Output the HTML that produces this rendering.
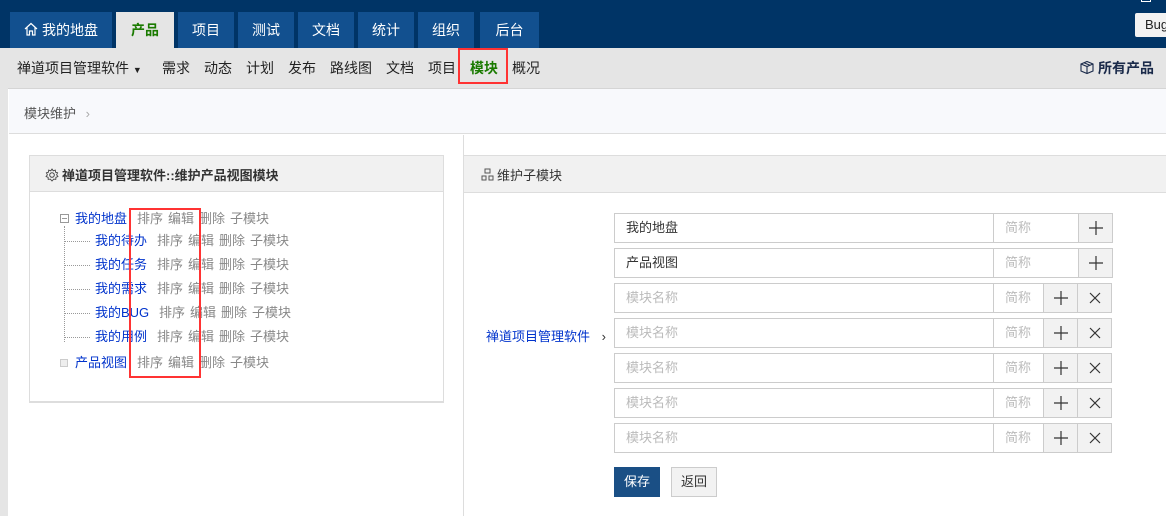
<!DOCTYPE html>
<html><head><meta charset="utf-8"><style>
*{margin:0;padding:0;box-sizing:border-box}
body{width:1166px;height:516px;overflow:hidden;background:#e5e5e5;font-family:"Liberation Sans","Noto Sans CJK SC",sans-serif;font-size:13px;color:#333;position:relative}
.a{position:absolute}
#top{left:0;top:0;width:1166px;height:48px;background:#003466}
.tab{position:absolute;top:12px;height:36px;background:#12508f;color:#fff;font-size:14px;line-height:36px;text-align:center}
.tab.on{background:#e5e5e5;color:#1a7a00;font-weight:bold}
.nav{top:59px;font-size:14px;color:#222;line-height:18px}
.tree{font-size:13px;line-height:16px;white-space:nowrap}
.n{color:#0033cc}
.g{color:#888}
.g span{display:inline-block;margin-right:5px}
.inp{position:absolute;height:30px;border:1px solid #ccc;background:#fff;line-height:28px;padding-left:11px;font-size:13px}
.btn{position:absolute;height:30px;width:35px;border:1px solid #ccc;background:#f2f2f2}
.btn svg{position:absolute;left:10px;top:7px}
</style></head><body>
<div id="top" class="a"></div>
<div class="a" style="left:1135px;top:13px;width:40px;height:24px;background:#f2f2f2;border-radius:2px;font-size:13px;line-height:24px;padding-left:10px;color:#222">Bug</div>
<div class="a" style="left:1141px;top:-6px;width:10px;height:8px;border:1px solid #fff"></div>
<div class="tab" style="left:10px;width:102px"><svg width="14" height="14" viewBox="0 0 14 14" style="vertical-align:-1px;margin-right:4px"><path d="M1 7L7 1.5L13 7M3 5.5V13H5.5V9H8.5V13H11V5.5" fill="none" stroke="#fff" stroke-width="1.2"/></svg>我的地盘</div>
<div class="tab on" style="left:116px;width:58px">产品</div>
<div class="tab" style="left:178px;width:56px">项目</div>
<div class="tab" style="left:238px;width:56px">测试</div>
<div class="tab" style="left:298px;width:56px">文档</div>
<div class="tab" style="left:358px;width:56px">统计</div>
<div class="tab" style="left:418px;width:56px">组织</div>
<div class="tab" style="left:480px;width:59px">后台</div>

<div class="a nav" style="left:17px">禅道项目管理软件 <span style="font-size:9px">▼</span></div>
<div class="a nav" style="left:162px">需求</div>
<div class="a nav" style="left:204px">动态</div>
<div class="a nav" style="left:246px">计划</div>
<div class="a nav" style="left:288px">发布</div>
<div class="a nav" style="left:330px">路线图</div>
<div class="a nav" style="left:386px">文档</div>
<div class="a nav" style="left:428px">项目</div>
<div class="a nav" style="left:470px;color:#1a7a00;font-weight:bold">模块</div>
<div class="a nav" style="left:512px">概况</div>
<div class="a" style="left:458px;top:48px;width:50px;height:36px;border:2px solid #f33"></div>
<div class="a nav" style="left:1079px;font-weight:bold;color:#1a2a4a"><svg width="16" height="15" viewBox="0 0 16 15" style="vertical-align:-2px;margin-right:3px"><path d="M2 4L8 1.5L14 4V11L8 13.5L2 11ZM2 4L8 6.5L14 4M8 6.5V13.5M5 2.8L11 5.3" fill="none" stroke="#1a2a4a" stroke-width="1.1"/></svg>所有产品</div>

<div class="a" style="left:8px;top:88px;width:1158px;height:428px;background:#fff;border-top:1px solid #d5d5d5"></div>
<div class="a" style="left:9px;top:89px;width:1157px;height:45px;background:#f8f9fc;border-bottom:1px solid #ddd"></div>
<div class="a" style="left:24px;top:103px;font-size:13px;color:#555">模块维护 <span style="color:#aaa;margin-left:6px">›</span></div>

<div class="a" style="left:463px;top:135px;width:1px;height:381px;background:#ddd"></div>

<div class="a" style="left:29px;top:155px;width:415px;height:248px;border:1px solid #ddd;border-bottom:2px solid #ddd"></div>
<div class="a" style="left:30px;top:156px;width:413px;height:36px;background:#f1f1f1;border-bottom:1px solid #ddd"></div>
<div class="a" style="left:45px;top:165px;font-weight:bold;color:#333"><svg width="14" height="14" viewBox="0 0 14 14" style="vertical-align:-2px;margin-right:3px"><circle cx="7" cy="7" r="2.3" fill="none" stroke="#444"/><path d="M7 1L8.2 2.8L10.3 2.1L10.5 4.2L12.6 4.8L11.6 6.8L12.9 8.5L10.9 9.3L10.8 11.4L8.7 11.1L7 13L5.3 11.1L3.2 11.4L3.1 9.3L1.1 8.5L2.4 6.8L1.4 4.8L3.5 4.2L3.7 2.1L5.8 2.8Z" fill="none" stroke="#444" stroke-width="0.9"/></svg>禅道项目管理软件::维护产品视图模块</div>

<div class="a" style="left:64px;top:226px;width:1px;height:116px;border-left:1px dotted #999"></div>
<div class="a" style="left:65px;top:241px;width:25px;border-top:1px dotted #999"></div>
<div class="a" style="left:65px;top:265px;width:25px;border-top:1px dotted #999"></div>
<div class="a" style="left:65px;top:289px;width:25px;border-top:1px dotted #999"></div>
<div class="a" style="left:65px;top:313px;width:25px;border-top:1px dotted #999"></div>
<div class="a" style="left:65px;top:337px;width:25px;border-top:1px dotted #999"></div>
<div class="a" style="left:60px;top:214px;width:9px;height:9px;border:1px solid #999;font-size:0"><div style="margin:3px 1px;height:1px;background:#999"></div></div>
<div class="a" style="left:60px;top:359px;width:8px;height:8px;border:1px solid #ccc;background:#eee"></div>

<div class="a tree n" style="left:75px;top:211px">我的地盘</div><div class="a tree g" style="left:137px;top:211px"><span>排序</span><span>编辑</span><span>删除</span><span>子模块</span></div>
<div class="a tree n" style="left:95px;top:233px">我的待办</div><div class="a tree g" style="left:157px;top:233px"><span>排序</span><span>编辑</span><span>删除</span><span>子模块</span></div>
<div class="a tree n" style="left:95px;top:257px">我的任务</div><div class="a tree g" style="left:157px;top:257px"><span>排序</span><span>编辑</span><span>删除</span><span>子模块</span></div>
<div class="a tree n" style="left:95px;top:281px">我的需求</div><div class="a tree g" style="left:157px;top:281px"><span>排序</span><span>编辑</span><span>删除</span><span>子模块</span></div>
<div class="a tree n" style="left:95px;top:305px">我的BUG</div><div class="a tree g" style="left:159px;top:305px"><span>排序</span><span>编辑</span><span>删除</span><span>子模块</span></div>
<div class="a tree n" style="left:95px;top:329px">我的用例</div><div class="a tree g" style="left:157px;top:329px"><span>排序</span><span>编辑</span><span>删除</span><span>子模块</span></div>
<div class="a tree n" style="left:75px;top:355px">产品视图</div><div class="a tree g" style="left:137px;top:355px"><span>排序</span><span>编辑</span><span>删除</span><span>子模块</span></div>
<div class="a" style="left:129px;top:208px;width:72px;height:170px;border:2px solid #f33"></div>

<div class="a" style="left:464px;top:155px;width:702px;height:38px;background:#f1f1f1;border-top:1px solid #ddd;border-bottom:1px solid #ddd"></div>
<div class="a" style="left:481px;top:165px;color:#333"><svg width="13" height="13" viewBox="0 0 13 13" style="vertical-align:-1px;margin-right:3px"><rect x="4" y="1" width="5" height="4" fill="none" stroke="#555"/><rect x="1" y="8" width="4" height="4" fill="none" stroke="#555"/><rect x="8" y="8" width="4" height="4" fill="none" stroke="#555"/></svg>维护子模块</div>
<div class="a" style="left:486px;top:326px;color:#0033cc">禅道项目管理软件 <span style="color:#333;margin-left:8px">›</span></div>

<div class="inp" style="left:614px;top:213px;width:380px">我的地盘</div><div class="inp" style="left:993px;top:213px;width:86px;color:#bbb">简称</div><div class="btn" style="left:1078px;top:213px"><svg width="14" height="14"><path d="M7 0V14M0 7H14" stroke="#333" stroke-width="1.2"/></svg></div>
<div class="inp" style="left:614px;top:248px;width:380px">产品视图</div><div class="inp" style="left:993px;top:248px;width:86px;color:#bbb">简称</div><div class="btn" style="left:1078px;top:248px"><svg width="14" height="14"><path d="M7 0V14M0 7H14" stroke="#333" stroke-width="1.2"/></svg></div>

<div class="inp" style="left:614px;top:283px;width:380px;color:#bbb">模块名称</div><div class="inp" style="left:993px;top:283px;width:51px;color:#bbb">简称</div><div class="btn" style="left:1043px;top:283px"><svg width="14" height="14"><path d="M7 0V14M0 7H14" stroke="#333" stroke-width="1.2"/></svg></div><div class="btn" style="left:1077px;top:283px"><svg width="14" height="14"><path d="M2 2L12 12M12 2L2 12" stroke="#333" stroke-width="1.2"/></svg></div>
<div class="inp" style="left:614px;top:318px;width:380px;color:#bbb">模块名称</div><div class="inp" style="left:993px;top:318px;width:51px;color:#bbb">简称</div><div class="btn" style="left:1043px;top:318px"><svg width="14" height="14"><path d="M7 0V14M0 7H14" stroke="#333" stroke-width="1.2"/></svg></div><div class="btn" style="left:1077px;top:318px"><svg width="14" height="14"><path d="M2 2L12 12M12 2L2 12" stroke="#333" stroke-width="1.2"/></svg></div>
<div class="inp" style="left:614px;top:353px;width:380px;color:#bbb">模块名称</div><div class="inp" style="left:993px;top:353px;width:51px;color:#bbb">简称</div><div class="btn" style="left:1043px;top:353px"><svg width="14" height="14"><path d="M7 0V14M0 7H14" stroke="#333" stroke-width="1.2"/></svg></div><div class="btn" style="left:1077px;top:353px"><svg width="14" height="14"><path d="M2 2L12 12M12 2L2 12" stroke="#333" stroke-width="1.2"/></svg></div>
<div class="inp" style="left:614px;top:388px;width:380px;color:#bbb">模块名称</div><div class="inp" style="left:993px;top:388px;width:51px;color:#bbb">简称</div><div class="btn" style="left:1043px;top:388px"><svg width="14" height="14"><path d="M7 0V14M0 7H14" stroke="#333" stroke-width="1.2"/></svg></div><div class="btn" style="left:1077px;top:388px"><svg width="14" height="14"><path d="M2 2L12 12M12 2L2 12" stroke="#333" stroke-width="1.2"/></svg></div>
<div class="inp" style="left:614px;top:423px;width:380px;color:#bbb">模块名称</div><div class="inp" style="left:993px;top:423px;width:51px;color:#bbb">简称</div><div class="btn" style="left:1043px;top:423px"><svg width="14" height="14"><path d="M7 0V14M0 7H14" stroke="#333" stroke-width="1.2"/></svg></div><div class="btn" style="left:1077px;top:423px"><svg width="14" height="14"><path d="M2 2L12 12M12 2L2 12" stroke="#333" stroke-width="1.2"/></svg></div>

<div class="a" style="left:614px;top:467px;width:46px;height:30px;background:#1a4f85;color:#fff;text-align:center;line-height:30px">保存</div>
<div class="a" style="left:671px;top:467px;width:46px;height:30px;background:#f2f2f2;border:1px solid #ccc;color:#333;text-align:center;line-height:28px">返回</div>
</body></html>
